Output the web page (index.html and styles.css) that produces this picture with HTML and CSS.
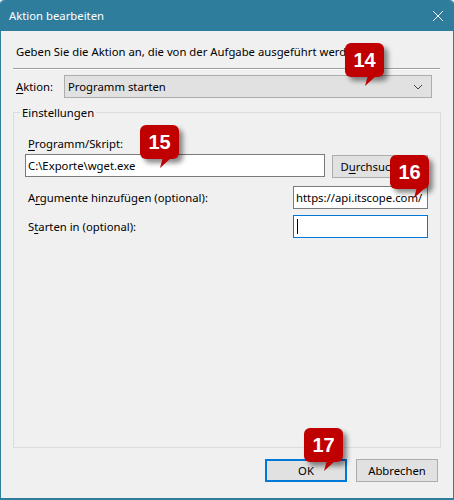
FILE: index.html
```html
<!DOCTYPE html>
<html lang="de">
<head>
  <meta charset="UTF-8">
  <meta name="viewport" content="width=device-width, initial-scale=1.0">
  <title>Aktion bearbeiten</title>
  <link rel="stylesheet" href="styles.css">
</head>
<body>
  <div class="window">
    <div class="titlebar">
      <span class="title">Aktion bearbeiten</span>
      <svg class="close" width="10" height="10" viewBox="0 0 10 10"><path d="M0 0L10 10M10 0L0 10" stroke="#fff" stroke-width="1" fill="none"/></svg>
    </div>

    <div class="content">
      <p class="intro">Geben Sie die Aktion an, die von der Aufgabe ausgeführt werden</p>
      <div class="separator"></div>

      <div class="action-row">
        <label class="action-label"><u>A</u>ktion:</label>
        <div class="select">
          <span>Programm starten</span>
          <svg width="10" height="6" viewBox="0 0 10 6"><path d="M1 1L5 5L9 1" stroke="#444" stroke-width="1" fill="none"/></svg>
        </div>
      </div>

      <div class="group">
        <span class="legend">Einstellungen</span>
        <label class="program-label"><u>P</u>rogramm/Skript:</label>
        <div class="program-row">
          <div class="input program-input">C:\Exporte\wget.exe</div>
          <div class="button browse">D<u>u</u>rchsuchen...</div>
        </div>
        <div class="field-row">
          <label>A<u>r</u>gumente hinzufügen (optional):</label>
          <div class="input field-input">https://api.itscope.com/</div>
        </div>
        <div class="field-row">
          <label>S<u>t</u>arten in (optional):</label>
          <div class="input field-input focused"><span class="caret"></span></div>
        </div>
      </div>

      <div class="buttons">
        <div class="button ok">OK</div>
        <div class="button">Abbrechen</div>
      </div>
    </div>
  </div>

  <div class="callout c14">14</div>
  <div class="callout c15">15</div>
  <div class="callout c16">16</div>
  <div class="callout c17">17</div>
</body>
</html>
```

FILE: styles.css
```css
* { box-sizing: border-box; }
html, body { margin: 0; padding: 0; background: #fff; }
body {
  position: relative;
  width: 454px;
  height: 500px;
  overflow: hidden;
  font-family: "Noto Sans", "Open Sans", sans-serif;
  font-size: 11.3px;
  color: #000;
}
u { text-underline-offset: 2px; text-decoration-thickness: 1px; }
.window {
  width: 454px;
  height: 500px;
  background: #f0f0f0;
  border: 1px solid #2e7d9d;
  border-width: 0 1px 2px 1px;
  border-radius: 4px 4px 0 0;
  display: flex;
  flex-direction: column;
}
.titlebar {
  height: 31px;
  flex: none;
  background: #2e7d9d;
  color: #fff;
  display: flex;
  align-items: center;
  justify-content: space-between;
  padding: 0 10px 0 8px;
  border-radius: 4px 4px 0 0;
}
.content {
  flex: 1;
  padding: 12px 12px 0;
  display: flex;
  flex-direction: column;
}
.intro { margin: 0 0 0 3px; height: 17px; line-height: 17px; white-space: nowrap; }
.separator {
  height: 2px;
  margin: 8px 0 0 0;
  background: #a0a0a0;
  border-bottom: 1px solid #fff;
  width: 427px;
}
.action-row { display: flex; align-items: center; margin: 5px 0 0 3px; }
.action-label { width: 48px; }
.select {
  width: 368px;
  height: 23px;
  background: #e1e1e1;
  border: 1px solid #adadad;
  display: flex;
  align-items: center;
  justify-content: space-between;
  padding: 0 8px 0 3px;
}
.group {
  position: relative;
  width: 428px;
  height: 336px;
  margin-top: 14px;
  border: 1px solid #dcdcdc;
  padding: 22px 12px 0 11px;
  display: flex;
  flex-direction: column;
}
.legend {
  position: absolute;
  top: -9px;
  left: 6px;
  padding: 0 2px;
  background: #f0f0f0;
  line-height: 17px;
}
.program-label { display: block; margin-left: 3px; line-height: 17px; }
.program-row { display: flex; gap: 7px; margin-top: 2px; }
.input {
  background: #fff;
  border: 1px solid #7a7a7a;
  height: 23px;
  line-height: 21px;
  padding: 0 2px;
  white-space: nowrap;
  overflow: hidden;
}
.program-input { width: 301px; }
.button {
  height: 23px;
  background: #e1e1e1;
  border: 1px solid #adadad;
  display: flex;
  align-items: center;
  justify-content: center;
}
.browse { width: 96px; margin-top: 1px; white-space: nowrap; }
.field-row {
  display: flex;
  justify-content: space-between;
  align-items: center;
  margin-top: 6px;
}
.field-row label { margin-left: 3px; }
.program-row + .field-row { margin-top: 8px; }
.field-input { width: 135px; }
.focused { border: 1px solid #0078d7; display: flex; align-items: center; }
.caret { width: 1px; height: 15px; background: #000; margin-left: 1px; }
.buttons {
  display: flex;
  justify-content: flex-end;
  gap: 9px;
  margin-top: 11px;
  padding-right: 3px;
}
.buttons .button { width: 82px; height: 23px; }
.ok { border: 2px solid #0078d7; }
.callout {
  position: absolute;
  width: 39px;
  height: 34px;
  background: #c00000;
  border-radius: 6px;
  color: #fff;
  font-family: "Liberation Sans", Arial, sans-serif;
  font-weight: bold;
  font-size: 20px;
  display: flex;
  align-items: center;
  justify-content: center;
  box-shadow: 4px 4px 5px rgba(0, 0, 0, 0.45);
}
.callout::after {
  content: "";
  position: absolute;
  left: 20px;
  bottom: -9px;
  width: 11px;
  height: 10px;
  background: #c00000;
  clip-path: polygon(0 100%, 25% 0, 100% 0);
}
.c14 { left: 345px; top: 43px; }
.c15 { left: 140px; top: 125px; }
.c16 { left: 390px; top: 155px; }
.c16::after { left: 24px; }
.c17 { left: 304px; top: 428px; }
```
